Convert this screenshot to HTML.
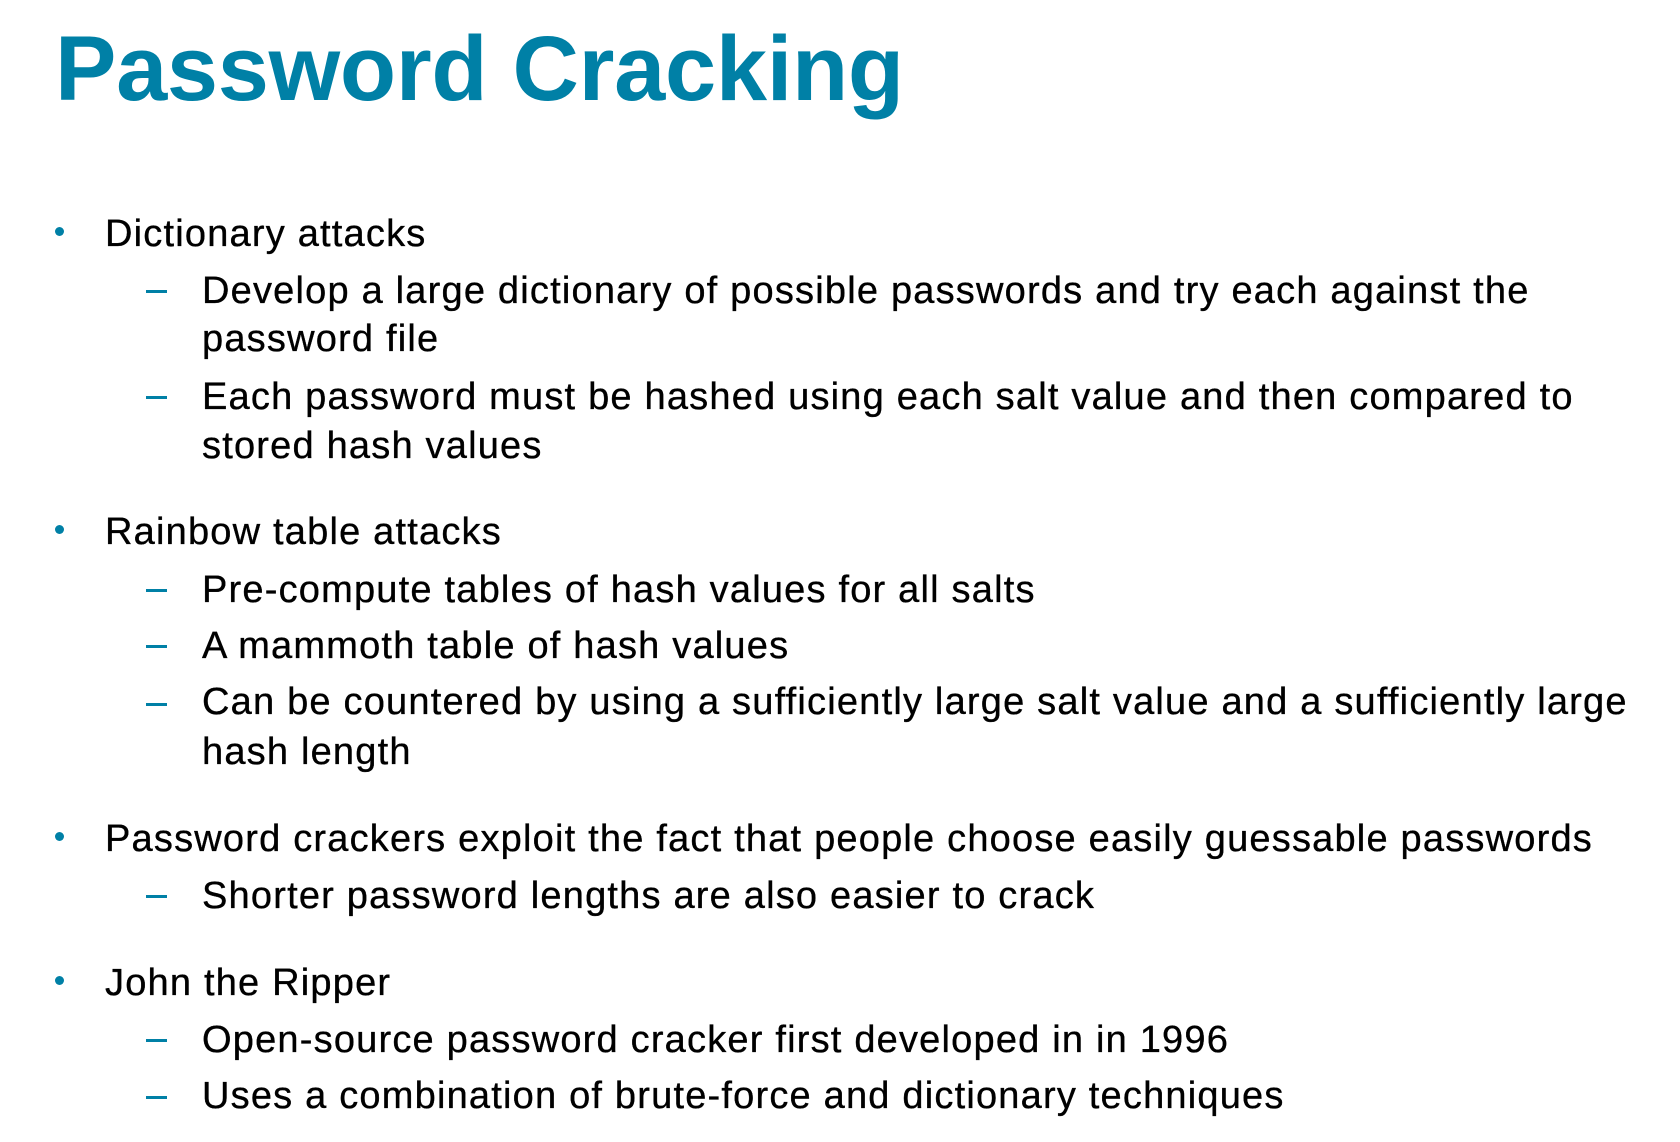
<!DOCTYPE html>
<html><head><meta charset="utf-8"><style>
html,body{margin:0;padding:0;background:#fff;}
body{width:1680px;height:1142px;position:relative;overflow:hidden;font-family:"Liberation Sans",Arial,sans-serif;}
.t{position:absolute;left:55px;top:23px;font-size:92px;font-weight:bold;color:#0080a6;line-height:1;white-space:nowrap;letter-spacing:-0.3px;}
.l{position:absolute;font-size:38px;line-height:1;color:#000;white-space:nowrap;letter-spacing:1.2px;-webkit-text-stroke:0.35px #000;}
.b{position:absolute;width:9px;height:9px;border-radius:50%;background:#0080a6;left:55px;}
.d{position:absolute;width:21px;height:3px;background:#0080a6;left:146px;}
</style></head><body>
<div class="t">Password Cracking</div>

<div class="b" style="top:227px"></div>
<div class="l" style="left:105px;top:215px">Dictionary attacks</div>
<div class="d" style="top:290px"></div>
<div class="l" style="left:202px;top:272px">Develop a large dictionary of possible passwords and try each against the</div>
<div class="l" style="left:202px;top:320px">password file</div>
<div class="d" style="top:396px"></div>
<div class="l" style="left:202px;top:378px">Each password must be hashed using each salt value and then compared to</div>
<div class="l" style="left:202px;top:427px">stored hash values</div>

<div class="b" style="top:525px"></div>
<div class="l" style="left:105px;top:513px">Rainbow table attacks</div>
<div class="d" style="top:589px"></div>
<div class="l" style="left:202px;top:571px">Pre-compute tables of hash values for all salts</div>
<div class="d" style="top:645px"></div>
<div class="l" style="left:202px;top:627px">A mammoth table of hash values</div>
<div class="d" style="top:703px"></div>
<div class="l" style="left:202px;top:683px">Can be countered by using a sufficiently large salt value and a sufficiently large</div>
<div class="l" style="left:202px;top:733px">hash length</div>

<div class="b" style="top:832px"></div>
<div class="l" style="left:105px;top:820px">Password crackers exploit the fact that people choose easily guessable passwords</div>
<div class="d" style="top:895px"></div>
<div class="l" style="left:202px;top:877px">Shorter password lengths are also easier to crack</div>

<div class="b" style="top:976px"></div>
<div class="l" style="left:105px;top:964px">John the Ripper</div>
<div class="d" style="top:1039px"></div>
<div class="l" style="left:202px;top:1021px">Open-source password cracker first developed in in 1996</div>
<div class="d" style="top:1096px"></div>
<div class="l" style="left:202px;top:1077px">Uses a combination of brute-force and dictionary techniques</div>
</body></html>
